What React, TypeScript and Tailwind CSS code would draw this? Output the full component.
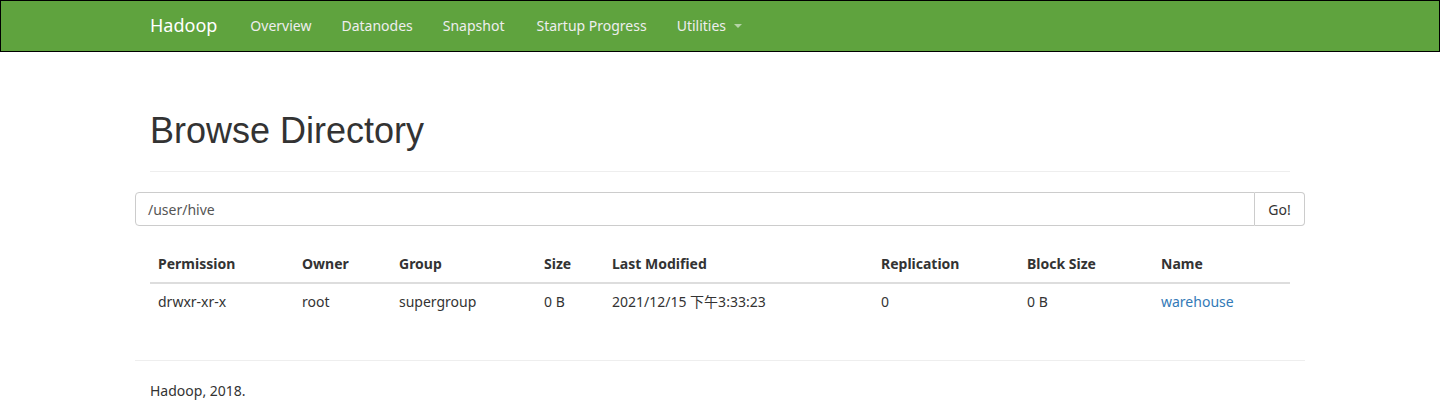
import React from "react";

const body = { fontFamily: '"Noto Sans", "Noto Sans CJK SC", sans-serif' };

export default function App() {
  const cols: [string, string][] = [
    ["Permission", "w-[144px]"],
    ["Owner", "w-[97px]"],
    ["Group", "w-[145px]"],
    ["Size", "w-[68px]"],
    ["Last Modified", "w-[269px]"],
    ["Replication", "w-[146px]"],
    ["Block Size", "w-[134px]"],
    ["Name", ""],
  ];
  const row = ["drwxr-xr-x", "root", "supergroup", "0 B", "2021/12/15 下午3:33:23", "0", "0 B"];
  const links: [string, string][] = [
    ["Overview", "px-[15px]"],
    ["Datanodes", "px-[15px]"],
    ["Snapshot", "pl-[15px] pr-[16px]"],
    ["Startup Progress", "pl-[16px] pr-[15px]"],
  ];
  return (
    <div className="min-h-[420px] bg-white text-[14px] text-[#333]" style={body}>
      <nav className="h-[52px] border border-black bg-[#5fa33e]">
        <div className="mx-auto flex h-full w-[1170px] items-center pb-[2px]">
          <span className="pl-[15px] pr-[18px] text-[18px] text-white">Hadoop</span>
          {links.map(([t, p]) => (
            <span key={t} className={`${p} text-[#eee]`}>
              {t}
            </span>
          ))}
          <span className="flex items-center px-[15px] text-[#eee]">
            Utilities
            <span className="ml-[8px] mt-[2px] h-0 w-0 border-x-[4px] border-t-[4px] border-x-transparent border-t-[#b5d3a6]" />
          </span>
        </div>
      </nav>
      <div className="mx-auto w-[1170px] px-[15px]">
        <div className="mt-[59px] border-b border-[#eee] pb-[20px]">
          <h1
            className="text-[36px] leading-[40px] text-[#333]"
            style={{ fontFamily: '"Liberation Sans", Arial, sans-serif' }}
          >
            Browse Directory
          </h1>
        </div>
      </div>
      <div className="mx-auto w-[1170px]">
        <div className="mt-[20px] flex h-[34px]">
          <div className="flex flex-1 items-center rounded-l-[4px] border border-[#ccc] px-[12px] text-[#555]">
            /user/hive
          </div>
          <div className="flex w-[50px] items-center justify-center rounded-r-[4px] border border-l-0 border-[#ccc] text-[#333]">
            Go!
          </div>
        </div>
      </div>
      <div className="mx-auto w-[1170px] px-[15px]">
        <table className="mt-[20px] w-full border-collapse text-left">
          <thead>
            <tr>
              {cols.map(([c, w]) => (
                <th key={c} className={`${w} border-b-2 border-[#ddd] px-[8px] py-[8px] font-bold leading-[20px]`}>
                  {c}
                </th>
              ))}
            </tr>
          </thead>
          <tbody>
            <tr>
              {row.map((c, i) => (
                <td key={i} className="px-[8px] py-[8px] leading-[20px]">
                  {c}
                </td>
              ))}
              <td className="px-[8px] py-[8px] leading-[20px] text-[#337ab7]">warehouse</td>
            </tr>
          </tbody>
        </table>
      </div>
      <div className="mx-auto w-[1170px]">
        <div className="mt-[40px] border-t border-[#eee]" />
        <div className="px-[15px] pt-[20px] leading-[20px]">Hadoop, 2018.</div>
      </div>
    </div>
  );
}
